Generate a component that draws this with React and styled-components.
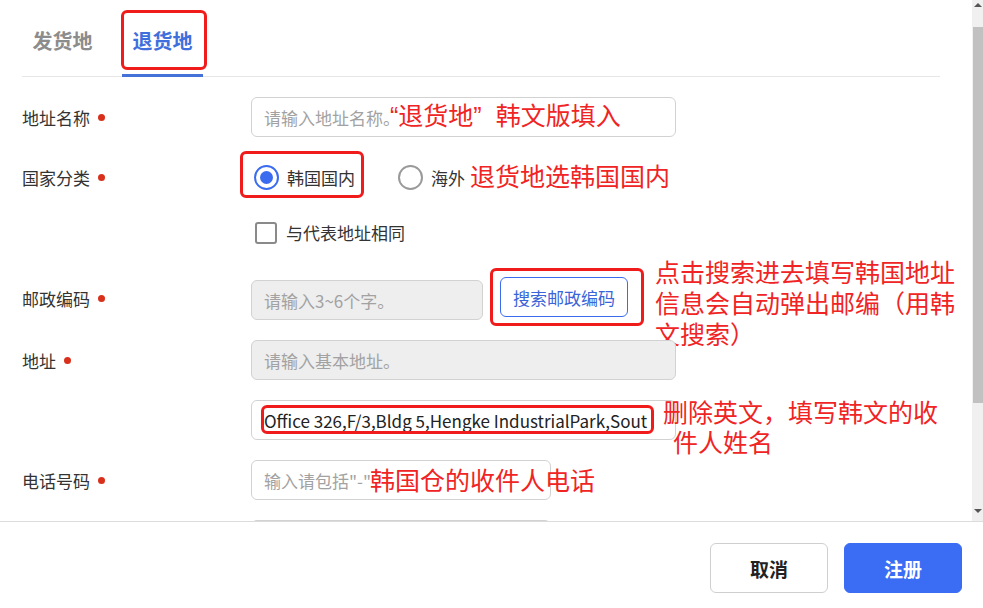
import React from 'react';
import styled, { createGlobalStyle } from 'styled-components';

const GlobalStyle = createGlobalStyle`
  html, body {
    margin: 0;
    padding: 0;
    background: #fff;
  }
  body {
    font-family: "Noto Sans CJK SC", "Microsoft YaHei", sans-serif;
    color: #333;
  }
`;

const Page = styled.div`
  width: 983px;
  height: 608px;
  display: flex;
  flex-direction: column;
  overflow: hidden;
`;

const Body = styled.div`
  height: 521px;
  display: flex;
  overflow: hidden;
`;

const Content = styled.div`
  flex: 1;
  padding: 0 32px 0 22px;
  overflow: hidden;
`;

const Tabs = styled.div`
  display: flex;
  gap: 19px;
  height: 76px;
  border-bottom: 1px solid #e6e6e6;
`;

const Tab = styled.div`
  position: relative;
  width: 81px;
  display: flex;
  align-items: center;
  justify-content: center;
  padding-top: 4px;
  box-sizing: border-box;
  font-size: 20px;
  font-weight: 700;
  color: ${p => (p.$active ? '#3f6fdc' : '#8c8c8c')};

  &::after {
    content: '';
    position: absolute;
    left: 0;
    right: 0;
    bottom: -1px;
    height: 3px;
    background: ${p => (p.$active ? '#4472d8' : 'transparent')};
  }
`;

const RedBox = styled.div`
  position: absolute;
  top: ${p => p.$t}px;
  left: ${p => p.$l}px;
  width: ${p => p.$w}px;
  height: ${p => p.$h}px;
  box-sizing: border-box;
  border: 3px solid #f01c1c;
  border-radius: 6px;
  pointer-events: none;
`;

const Form = styled.div`
  display: flex;
  flex-direction: column;
  gap: 20px;
  margin-top: 20px;
`;

const Row = styled.div`
  position: relative;
  display: flex;
  align-items: ${p => p.$align || 'center'};
  height: ${p => p.$h || 40}px;
  padding-top: ${p => p.$pt || 0}px;
  box-sizing: border-box;
`;

const Label = styled.div`
  width: 229px;
  flex-shrink: 0;
  display: flex;
  align-items: center;
  font-size: 17px;
  color: #333;
  align-self: center;
`;

const Dot = styled.span`
  width: 7px;
  height: 7px;
  border-radius: 50%;
  background: #d8301a;
  margin-left: 8px;
`;

const FieldWrap = styled.div`
  position: relative;
  align-self: ${p => p.$self || 'auto'};
`;

const Field = styled.input`
  display: block;
  box-sizing: border-box;
  width: ${p => p.$w}px;
  height: 40px;
  border: 1px solid #d2d2d2;
  border-radius: 6px;
  padding: 0 12px;
  font-family: inherit;
  font-size: 17px;
  color: #222;
  background: ${p => (p.disabled ? '#eeeeee' : '#fff')};
  outline: none;

  &::placeholder {
    color: #a2a2a2;
  }
`;

const Note = styled.div`
  position: absolute;
  left: ${p => p.$x}px;
  top: ${p => p.$y}px;
  font-size: 25px;
  line-height: ${p => p.$lh || 31}px;
  color: #f02424;
  white-space: nowrap;
  pointer-events: none;
`;

const NoteLine = styled.div`
  height: ${p => p.$lh || 31}px;
  overflow: visible;
  padding-left: ${p => p.$indent || 0}px;
`;

const Quote = styled.span`
  font-family: "Liberation Sans", Arial, sans-serif;
  padding-right: ${p => p.$gap || 0}px;
`;

const RadioGroup = styled.div`
  display: flex;
  align-items: center;
  gap: 43px;
  margin-left: 3px;
`;

const RadioItem = styled.label`
  position: relative;
  display: flex;
  align-items: center;
  gap: 8px;
  font-size: 17px;
  color: #333;
`;

const RadioCircle = styled.span`
  width: 25px;
  height: 25px;
  box-sizing: border-box;
  border-radius: 50%;
  border: 2px solid ${p => (p.$on ? '#3b6cf0' : '#9a9a9a')};
  display: flex;
  align-items: center;
  justify-content: center;

  &::after {
    content: '';
    width: 13px;
    height: 13px;
    border-radius: 50%;
    background: ${p => (p.$on ? '#3b6cf0' : 'transparent')};
  }
`;

const CheckItem = styled.label`
  display: flex;
  align-items: center;
  gap: 9px;
  margin-left: 4px;
  font-size: 17px;
  color: #333;
`;

const CheckBox = styled.span`
  width: 22px;
  height: 22px;
  box-sizing: border-box;
  border: 2px solid #8a8a8a;
  border-radius: 3px;
`;

const SearchBtn = styled.button`
  position: relative;
  align-self: flex-start;
  margin-left: 17px;
  width: 128px;
  height: 40px;
  border: 1px solid #3b6cf0;
  border-radius: 6px;
  background: #fff;
  color: #3a64d8;
  font-family: inherit;
  font-size: 17px;
  padding: 0;
`;

const Footer = styled.div`
  flex: 1;
  border-top: 1px solid #dcdcdc;
  display: flex;
  justify-content: flex-end;
  align-items: flex-start;
  gap: 16px;
  padding: 21px 21px 0 0;
`;

const FootBtn = styled.button`
  width: 118px;
  height: 50px;
  border-radius: 6px;
  font-family: inherit;
  font-size: 19px;
  font-weight: 700;
  border: 1px solid ${p => (p.$primary ? '#3a6cf4' : '#cfcfcf')};
  background: ${p => (p.$primary ? '#3a6cf4' : '#fff')};
  color: ${p => (p.$primary ? '#fff' : '#222')};
`;

const ScrollBar = styled.div`
  width: 11px;
  flex-shrink: 0;
  background: #f0f0f0;
  display: flex;
  flex-direction: column;
  align-items: center;
`;

const Arrow = styled.span`
  width: 0;
  height: 0;
  margin: ${p => (p.$down ? '0 0 8px' : '3px 0 0')};
  border-left: 4px solid transparent;
  border-right: 4px solid transparent;
  ${p => (p.$down ? 'border-top: 4px solid #555;' : 'border-bottom: 4px solid #555;')}
`;

const Thumb = styled.div`
  width: 10px;
  height: 376px;
  margin-top: 20px;
  background: #c1c1c1;
`;

const Spacer = styled.div`
  flex: 1;
`;

export default function App() {
  return (
    <Page>
      <GlobalStyle />
      <Body>
        <Content>
          <Tabs>
            <Tab>发货地</Tab>
            <Tab $active>
              退货地
              <RedBox $t={10} $l={-1} $w={86} $h={60} />
            </Tab>
          </Tabs>

          <Form>
            <Row>
              <Label>地址名称<Dot /></Label>
              <Field $w={425} placeholder="请输入地址名称。" />
              <Note $x={368} $y={2}>
                <Quote>“</Quote>退货地<Quote $gap={14}>”</Quote>韩文版填入
              </Note>
            </Row>

            <Row>
              <Label>国家分类<Dot /></Label>
              <RadioGroup>
                <RadioItem>
                  <RadioCircle $on />
                  韩国国内
                  <RedBox $t={-14} $l={-14} $w={124} $h={47} />
                </RadioItem>
                <RadioItem>
                  <RadioCircle />
                  海外
                </RadioItem>
              </RadioGroup>
              <Note $x={448} $y={3}>退货地选韩国国内</Note>
            </Row>

            <Row $align="flex-start" $pt={3}>
              <Label style={{ visibility: 'hidden' }} />
              <CheckItem>
                <CheckBox />
                与代表地址相同
              </CheckItem>
            </Row>

            <Row $h={43} $align="flex-end">
              <Label>邮政编码<Dot /></Label>
              <FieldWrap $self="flex-end">
                <Field $w={232} disabled placeholder="请输入3~6个字。" />
              </FieldWrap>
              <SearchBtn>
                搜索邮政编码
                <RedBox $t={-10} $l={-11} $w={154} $h={58} />
              </SearchBtn>
              <Note $x={633} $y={-21}>
                <NoteLine>点击搜索进去填写韩国地址</NoteLine>
                <NoteLine>信息会自动弹出邮编（用韩</NoteLine>
                <NoteLine>文搜索）</NoteLine>
              </Note>
            </Row>

            <Row>
              <Label>地址<Dot /></Label>
              <Field $w={425} disabled placeholder="请输入基本地址。" />
            </Row>

            <Row>
              <Label />
              <FieldWrap>
                <Field $w={425} defaultValue="Office 326,F/3,Bldg 5,Hengke IndustrialPark,Sout" />
                <RedBox $t={5} $l={10} $w={393} $h={29} />
              </FieldWrap>
              <Note $x={641} $y={-4} $lh={30}>
                <NoteLine $lh={30}>删除英文，填写韩文的收</NoteLine>
                <NoteLine $lh={30} $indent={10}>件人姓名</NoteLine>
              </Note>
            </Row>

            <Row>
              <Label>电话号码<Dot /></Label>
              <Field $w={300} placeholder={'输入请包括"-"'} />
              <Note $x={348} $y={4}>韩国仓的收件人电话</Note>
            </Row>

            <Row>
              <Label />
              <Field $w={300} />
            </Row>
          </Form>
        </Content>
        <ScrollBar>
          <Arrow />
          <Thumb />
          <Spacer />
          <Arrow $down />
        </ScrollBar>
      </Body>
      <Footer>
        <FootBtn>取消</FootBtn>
        <FootBtn $primary>注册</FootBtn>
      </Footer>
    </Page>
  );
}
